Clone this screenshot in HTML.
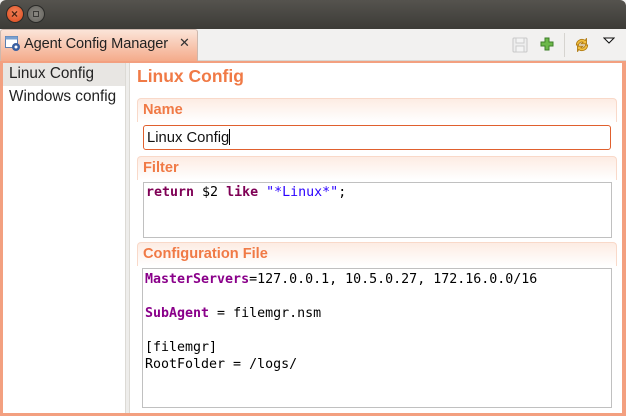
<!DOCTYPE html>
<html><head><meta charset="utf-8"><style>
*{box-sizing:border-box;margin:0;padding:0}
body{width:626px;height:416px;overflow:hidden;background:#f2f1f0;font-family:"Liberation Sans","DejaVu Sans",sans-serif;font-size:14px;position:relative}
.abs{position:absolute}
#title{left:0;top:0;width:626px;height:29px;background:linear-gradient(#55534e,#3c3b37);border-radius:6px 6px 0 0}
.btn{width:18px;height:18px;border-radius:50%;top:5px}
#tabbar{left:0;top:29px;width:626px;height:32px;background:#f2f1f0;border-bottom:1px solid #d8d6d2}
#tab{left:0;top:29px;width:198px;height:33px;background:linear-gradient(#fbe4d8,#f4a988);border:1px solid #cdb8ae;border-bottom:none;border-radius:3px 3px 0 0}
#frame{left:0;top:61px;width:626px;height:355px;background:#f3a080}
#list{left:3px;top:63px;width:122px;height:350px;background:#fff}
#sep{left:125px;top:63px;width:5px;height:350px;background:#eeedeb;border-left:1px solid #dcdad5;border-right:1px solid #dcdad5}
#main{left:130px;top:63px;width:492px;height:350px;background:#fff}
.sec{left:137px;width:480px;height:24px;border:1px solid #f9d9c9;border-bottom:none;border-radius:4px 4px 0 0;background:linear-gradient(#fdece3,#fff);color:#f07a46;font-weight:bold;font-size:14.6px;padding:3px 0 0 5px}
.box{background:#fff;border:1px solid #c0c0c0}
.mono{font-family:"DejaVu Sans Mono","Liberation Mono",monospace;font-size:13.3px;line-height:17px;color:#000;white-space:pre}
.kw{color:#7f0055;font-weight:bold}
.key{color:#8a008a;font-weight:bold}
</style></head><body>
<div id="title" class="abs"></div>
<div class="abs btn" style="left:6px;background:radial-gradient(circle at 50% 40%,#f4845a,#d9481c);border:1px solid #2a2a28"><span style="position:absolute;left:4px;top:0;color:#4a2414;font-size:12px;font-weight:bold;line-height:16px">×</span></div>
<div class="abs btn" style="left:27px;background:radial-gradient(#8a8882,#64625d);border:1px solid #2a2a28"><div style="position:absolute;left:5px;top:5px;width:6px;height:6px;border:1px solid #3a3936"></div></div>
<div id="tabbar" class="abs"></div>
<div id="tab" class="abs"></div>
<svg class="abs" style="left:4px;top:35px" width="18" height="18" viewBox="0 0 18 18"><rect x="1.5" y="1.5" width="12" height="11" fill="#fff" stroke="#5a7fb0"/><rect x="1.5" y="1.5" width="12" height="3" fill="#7aa0d0"/><circle cx="12" cy="12" r="4" fill="#3a5fa0"/><circle cx="12" cy="12" r="1.5" fill="#fff"/></svg>
<div class="abs" style="left:24px;top:36px;font-size:14.6px;color:#222;letter-spacing:-0.1px">Agent Config Manager</div>
<div class="abs" style="left:179px;top:35px;font-size:13px;color:#333;font-weight:bold">✕</div>
<svg class="abs" style="left:512px;top:37px" width="16" height="16"><rect x="1" y="1" width="14" height="14" rx="1" fill="#eee" stroke="#c8c8c8"/><rect x="4" y="1" width="8" height="5" fill="#f4f4f4" stroke="#ccc"/><rect x="4" y="9" width="8" height="6" fill="#f4f4f4" stroke="#ccc"/></svg>
<svg class="abs" style="left:540px;top:37px" width="14" height="14"><path d="M5 1h4v4h4v4h-4v4h-4v-4h-4v-4h4z" fill="#6cb84a" stroke="#3f7f2a"/></svg>
<div class="abs" style="left:564px;top:33px;width:1px;height:24px;background:#d6d4d0"></div>
<svg class="abs" style="left:573px;top:36px" width="18" height="18" viewBox="0 0 16 16"><path d="M3 8a5 5 0 0 1 8-4l1-2v5h-5l2-1.5a3 3 0 0 0-4 2.5z" fill="#f2c040" stroke="#b07a10" stroke-width=".8"/><path d="M13 8a5 5 0 0 1-8 4l-1 2v-5h5l-2 1.5a3 3 0 0 0 4-2.5z" fill="#f2c040" stroke="#b07a10" stroke-width=".8"/></svg>
<svg class="abs" style="left:603px;top:37px" width="12" height="8"><path d="M1 1h10l-5 5z" fill="#fff" stroke="#111"/></svg>
<div id="frame" class="abs"></div>
<div id="list" class="abs"></div>
<div class="abs" style="left:3px;top:63px;width:122px;height:23px;background:#e8e6e3"></div>
<div class="abs" style="left:9px;top:65px;color:#222;font-size:15.3px">Linux Config</div>
<div class="abs" style="left:9px;top:88px;color:#222;font-size:15.3px">Windows config</div>
<div id="sep" class="abs"></div>
<div id="main" class="abs"></div>
<div class="abs" style="left:137px;top:66px;color:#f07a46;font-weight:bold;font-size:17.5px">Linux Config</div>
<div class="abs sec" style="top:98px">Name</div>
<div class="abs" style="left:143px;top:125px;width:468px;height:25px;border:1.5px solid #e0602e;border-radius:3px;background:#fff;padding:3px 0 0 3px;font-size:14.8px;color:#111">Linux Config<span style="display:inline-block;width:1px;height:16px;background:#000;vertical-align:-3px"></span></div>
<div class="abs sec" style="top:156px">Filter</div>
<div class="abs box mono" style="left:143px;top:182px;width:469px;height:56px;padding:1px 0 0 2px"><span class="kw">return</span> $2 <span class="kw">like</span> <span style="color:#2a00ff">"*Linux*"</span>;</div>
<div class="abs sec" style="top:242px">Configuration File</div>
<div class="abs box mono" style="left:142px;top:268px;width:470px;height:140px;padding:2px 0 0 2px"><span class="key">MasterServers</span>=127.0.0.1, 10.5.0.27, 172.16.0.0/16

<span class="key">SubAgent</span> = filemgr.nsm

[filemgr]
RootFolder = /logs/</div>
</body></html>
